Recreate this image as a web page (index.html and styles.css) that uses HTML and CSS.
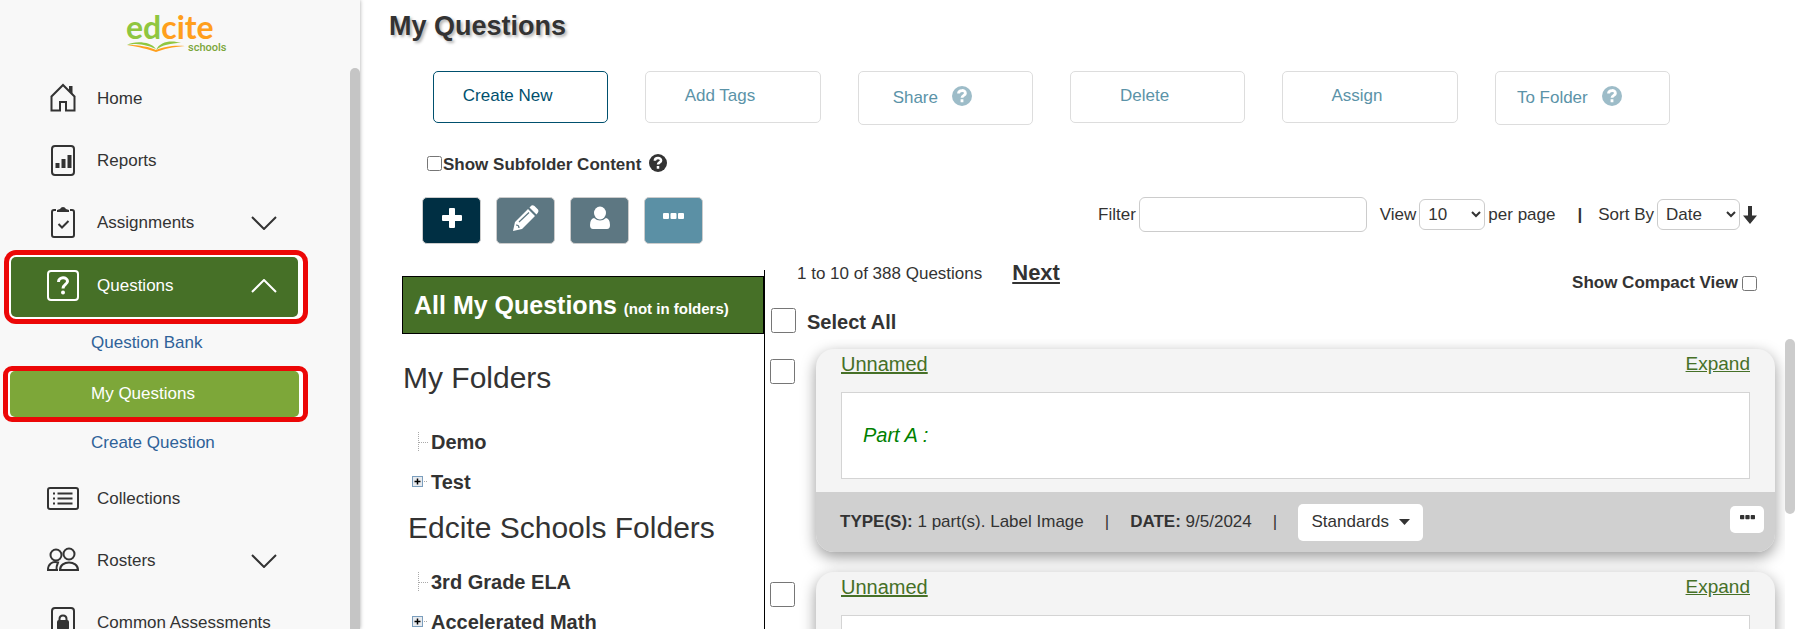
FILE: index.html
```html
<!DOCTYPE html>
<html lang="en">
<head>
  <meta charset="UTF-8" />
  <meta name="viewport" content="width=device-width, initial-scale=1.0"/>
  <title>My Questions</title>
  <link rel="stylesheet" href="styles.css">
</head>
<body>

  <svg class="sprite" aria-hidden="true">
    <symbol id="chevron" viewBox="0 0 26 14"><path d="M1 1l12 12L25 1" fill="none" stroke="currentColor" stroke-width="2"/></symbol>
    <symbol id="help" viewBox="0 0 20 20">
      <circle cx="10" cy="10" r="10" fill="currentColor"/>
      <path d="M6.500 7.600C6.500 3.500 13.600 3.600 13.400 7.300C13.300 9.400 10 9.300 10 11.800M10 13.300v3" fill="none" stroke="#fff" stroke-width="2.800"/>
    </symbol>
    <symbol id="dots" viewBox="0 0 21 7">
      <rect width="6" height="6" rx="1" fill="currentColor"/><rect x="7.500" width="6" height="6" rx="1" fill="currentColor"/><rect x="15" width="6" height="6" rx="1" fill="currentColor"/>
    </symbol>
    <symbol id="leaf" viewBox="0 0 16 20">
      <path d="M6.500 0v20M7 10.500h9" fill="none" stroke="#aaa" stroke-dasharray="1 1"/>
    </symbol>
    <symbol id="branch" viewBox="0 0 16 20">
      <path d="M12 9.500h4" fill="none" stroke="#aaa" stroke-dasharray="1 1"/>
      <rect x=".5" y="4.500" width="10" height="10" fill="#e8ebef" stroke="#7b9ebd"/>
      <path d="M2.500 9.500h6M5.500 6.500v6" stroke="#000" stroke-width="1.500"/>
    </symbol>
  </svg>

  <div class="layout">
    <aside class="sidebar">
      <a href="#" class="logo" aria-label="edcite schools">
        <svg width="110" height="56" viewBox="0 -9 110 56">
          <text x="0" y="30" class="logo-name"><tspan fill="#8fc640">ed</tspan><tspan fill="#ff9f1c">cite</tspan></text>
          <path d="M1 36C8 32 24 32 30 40C22 36 13 35 8 35z" fill="#8fc640"/>
          <path d="M30 41C34 32 46 31 55 34C45 34 36 36 30 41z" fill="#8fc640"/>
          <path d="M1 36C14 36 24 38 30 41C38 38 46 36 59 37C46 38 38 40 30 43C22 40 13 38 1 36z" fill="#ff9f1c"/>
          <text x="62" y="42" class="logo-sub" fill="#7ba63a">schools</text>
        </svg>
      </a>

      <nav class="nav">
        <ul>
          <li><a href="#" class="nav-link">
            <svg width="30" height="32" viewBox="0 0 30 32"><path d="M3 14L15 2l12 12M3.500 13.500V27.500H12V19h6v8.500h8.500V13.500" fill="none" stroke="currentColor" stroke-width="2"/><path d="M21 3h3.500v8L21 7.500z" fill="currentColor"/></svg>
            <span>Home</span></a></li>
          <li><a href="#" class="nav-link">
            <svg width="30" height="32" viewBox="0 0 30 32"><rect x="4" y="1" width="22" height="29" rx="3" fill="none" stroke="currentColor" stroke-width="2"/><path d="M7.500 18h4v5h-4zM13.500 14h4v9h-4zM19.500 10h4v13h-4z" fill="currentColor"/></svg>
            <span>Reports</span></a></li>
          <li><a href="#" class="nav-link">
            <svg width="30" height="32" viewBox="0 0 30 32"><path d="M8 3H6Q4 3 4 5V28Q4 30 6 30H24Q26 30 26 28V5Q26 3 24 3H22" fill="none" stroke="currentColor" stroke-width="2"/><path d="M9 5V3l3-1Q13 0 15 0T18 2l3 1V5z" fill="currentColor"/><path d="M10.500 17l3.500 3.500L20.500 14" fill="none" stroke="currentColor" stroke-width="2"/></svg>
            <span>Assignments</span>
            <svg class="chevron" width="26" height="14"><use href="#chevron"/></svg></a></li>
          <li class="framed framed-top"><a href="#" class="nav-link active">
            <svg width="32" height="32" viewBox="0 0 32 32"><rect x="1" y="1" width="30" height="29" rx="3" fill="none" stroke="currentColor" stroke-width="2"/><path d="M11.500 12C11.500 6.500 20.500 6.500 20.500 11.300C20.500 14.500 16 14.500 16 18.500" fill="none" stroke="currentColor" stroke-width="3"/><circle cx="16" cy="22.500" r="2" fill="currentColor"/></svg>
            <span>Questions</span>
            <svg class="chevron up" width="26" height="14"><use href="#chevron"/></svg></a></li>
          <li><a href="#" class="sub-link">Question Bank</a></li>
          <li class="framed framed-sub"><a href="#" class="sub-link current">My Questions</a></li>
          <li><a href="#" class="sub-link">Create Question</a></li>
          <li><a href="#" class="nav-link">
            <svg width="32" height="32" viewBox="0 0 32 32"><rect x="1" y="5" width="30" height="21" rx="2" fill="none" stroke="currentColor" stroke-width="2"/><path d="M6 10.500h2M6 15.500h2M6 20.500h2M10.500 10.500h15M10.500 15.500h15M10.500 20.500h15" stroke="currentColor" stroke-width="1.800"/></svg>
            <span>Collections</span></a></li>
          <li><a href="#" class="nav-link">
            <svg width="32" height="32" viewBox="0 0 32 32"><g fill="none" stroke="currentColor" stroke-width="2"><circle cx="9" cy="10" r="5.500"/><circle cx="22" cy="9" r="5.500"/><path d="M13 25C13 15 31 15 31 25zM11 25H1C1 19 5 16 11 17.500Q9 22 9.500 25"/></g></svg>
            <span>Rosters</span>
            <svg class="chevron" width="26" height="14"><use href="#chevron"/></svg></a></li>
          <li><a href="#" class="nav-link">
            <svg width="30" height="32" viewBox="0 0 30 32"><rect x="4" y="1" width="22" height="29" rx="3" fill="none" stroke="currentColor" stroke-width="2"/><path d="M11.500 14V12Q11.500 8.500 15 8.500T18.500 12V14" fill="none" stroke="currentColor" stroke-width="2"/><rect x="9" y="13" width="12" height="10" rx="2" fill="currentColor"/></svg>
            <span>Common Assessments</span></a></li>
        </ul>
        <div class="nav-thumb"></div>
      </nav>
    </aside>

    <main class="main">
      <h1>My Questions</h1>

      <div class="toolbar">
        <button type="button" class="tool primary">Create New</button>
        <button type="button" class="tool">Add Tags</button>
        <button type="button" class="tool tall">Share <svg width="20" height="20"><use href="#help"/></svg></button>
        <button type="button" class="tool">Delete</button>
        <button type="button" class="tool">Assign</button>
        <button type="button" class="tool tall">To Folder <svg width="20" height="20"><use href="#help"/></svg></button>
      </div>

      <div class="subfolder">
        <input type="checkbox" id="subfolder" class="check">
        <label for="subfolder">Show Subfolder Content</label>
        <svg width="18" height="18"><use href="#help"/></svg>
      </div>

      <div class="controls">
        <div class="actions">
          <button type="button" class="action add" aria-label="Add">
            <svg width="22" height="22" viewBox="0 0 22 22"><path d="M9 1h4q1 0 1 1v6h6q1 0 1 1v4q0 1-1 1h-6v6q0 1-1 1H9q-1 0-1-1v-6H2q-1 0-1-1V9q0-1 1-1h6V2q0-1 1-1z" fill="#fff"/></svg>
          </button>
          <button type="button" class="action" aria-label="Edit">
            <svg width="26" height="26" viewBox="0 0 26 26"><path d="M0 26l2-9L15 4l7 7L9 24zM16.500 2.500L18.500.5Q20 0 21.500 1L25 4.500Q26 6 25 7.500L23.500 9.500z" fill="#fff"/><path d="M6 17L16 7.500M3 20q3 0 3 3" fill="none" stroke="#5d7782" stroke-width="1.200"/></svg>
          </button>
          <button type="button" class="action" aria-label="User">
            <svg width="22" height="24" viewBox="0 0 22 24"><path d="M5 12Q8 14.500 11 14.500T17 12Q21 13 21 19Q21 23 18 23H4Q1 23 1 19Q1 13 5 12z" fill="#fff"/><ellipse cx="11" cy="7" rx="6" ry="6.500" fill="#fff"/></svg>
          </button>
          <button type="button" class="action more" aria-label="More">
            <svg width="21" height="7"><use href="#dots"/></svg>
          </button>
        </div>

        <div class="filters">
          <label for="filter">Filter</label>
          <input type="text" id="filter">
          <label for="perPage" class="view">View</label>
          <select id="perPage" class="per-page">
            <option>10</option>
            <option>25</option>
            <option>50</option>
          </select>
          <span>per page</span>
          <b class="divider">|</b>
          <label for="sortBy">Sort By</label>
          <select id="sortBy" class="sort-by">
            <option>Date</option>
            <option>Name</option>
          </select>
          <svg width="14" height="18" viewBox="0 0 14 18"><path d="M5 0h4v9.500h5L7 18 0 9.500h5z" fill="#333"/></svg>
        </div>
      </div>

      <div class="workspace">
        <section class="folders">
          <h2 class="all">All My Questions <small>(not in folders)</small></h2>
          <h3>My Folders</h3>
          <ul class="tree">
            <li><svg width="16" height="20"><use href="#leaf"/></svg>Demo</li>
            <li><svg width="16" height="20"><use href="#branch"/></svg>Test</li>
          </ul>
          <h3 class="schools">Edcite Schools Folders</h3>
          <ul class="tree">
            <li><svg width="16" height="20"><use href="#leaf"/></svg>3rd Grade ELA</li>
            <li><svg width="16" height="20"><use href="#branch"/></svg>Accelerated Math</li>
          </ul>
        </section>

        <section class="results">
          <div class="results-head">
            <span>1 to 10 of 388 Questions</span>
            <a href="#" class="next">Next</a>
            <div class="compact">
              <label for="compact">Show Compact View</label>
              <input type="checkbox" id="compact" class="check">
            </div>
          </div>
          <div class="select-all">
            <input type="checkbox" id="selectAll" class="check big">
            <label for="selectAll">Select All</label>
          </div>

          <div class="scroll-area">
            <div class="list">
              <div class="item">
                <input type="checkbox" class="check big" aria-label="Select question">
                <article class="card">
                  <div class="card-head">
                    <a href="#">Unnamed</a>
                    <a href="#" class="expand">Expand</a>
                  </div>
                  <div class="card-body">Part A :</div>
                  <div class="card-foot">
                    <span><b>TYPE(S):</b> 1 part(s). Label Image</span>
                    <span>|</span>
                    <span><b>DATE:</b> 9/5/2024</span>
                    <span>|</span>
                    <button type="button" class="standards">Standards <svg width="11" height="6" viewBox="0 0 11 6"><path d="M0 0h11L5.500 6z" fill="#333"/></svg></button>
                    <button type="button" class="card-more" aria-label="More"><svg width="15" height="5"><use href="#dots"/></svg></button>
                  </div>
                </article>
              </div>
              <div class="item">
                <input type="checkbox" class="check big" aria-label="Select question">
                <article class="card">
                  <div class="card-head">
                    <a href="#">Unnamed</a>
                    <a href="#" class="expand">Expand</a>
                  </div>
                  <div class="card-body"></div>
                </article>
              </div>
            </div>
            <div class="thumb"></div>
          </div>
        </section>
      </div>
    </main>
  </div>

</body>
</html>
```
FILE: styles.css
```css
* {
  box-sizing: border-box;
}
body {
  margin: 0;
  font-family: Arial, "Liberation Sans", sans-serif;
  font-size: 17px;
  color: #333;
  background: #fff;
}
ul {
  list-style: none;
  margin: 0;
  padding: 0;
}
button, input, select {
  font: inherit;
  color: inherit;
}
button {
  cursor: pointer;
}
.sprite {
  display: none;
}
.layout {
  display: flex;
  height: 100vh;
  overflow: hidden;
}

/* sidebar */
.sidebar {
  flex: 0 0 360px;
  background: #f8f8f8;
  box-shadow: 0 0 4px rgba(0, 0, 0, 0.35);
}
.logo {
  display: block;
  height: 68px;
  padding-left: 126px;
}
.logo svg {
  display: block;
}
.logo-name {
  font: bold 32px Lato, sans-serif;
}
.logo-sub {
  font: 500 11px Roboto, sans-serif;
}
.nav {
  display: flex;
}
.nav ul {
  flex: 1;
}
.nav-thumb {
  width: 10px;
  background: #c5c5c5;
  border-radius: 5px 5px 0 0;
}
.nav-link {
  display: flex;
  align-items: center;
  height: 62px;
  padding-left: 47px;
  color: #333;
  text-decoration: none;
}
.nav-link svg {
  flex: none;
}
.nav-link span {
  width: 154px;
  margin-left: 18px;
  white-space: nowrap;
}
.nav-link svg:first-child {
  width: 32px;
}
.nav-link .up {
  transform: rotate(180deg);
}
.nav-link.active {
  height: 60px;
  padding: 0 0 3px 36px;
  background: #467027;
  border-radius: 5px;
  color: #fff;
}
.sub-link {
  display: block;
  padding-left: 91px;
  line-height: 50px;
  color: #2f6299;
  text-decoration: none;
}
.sub-link.current {
  padding-left: 81px;
  line-height: 46px;
  background: #7da739;
  border-radius: 5px;
  color: #fff;
}
.framed {
  border: 5px solid #ec0707;
  background: #fff;
}
.framed-top {
  margin: -4px 42px -6px 4px;
  padding: 2px 5px 2px 2px;
  border-radius: 12px;
}
.framed-sub {
  margin: -2px 42px -4px 3px;
  padding: 0 4px 0 2px;
  border-radius: 9px;
}

/* main */
.main {
  flex: 1;
  min-width: 0;
  display: flex;
  flex-direction: column;
}
h1 {
  margin: 0 0 0 29px;
  font-size: 27px;
  line-height: 52px;
  text-shadow: 2px 2px 3px rgba(0, 0, 0, 0.3);
}
.toolbar {
  display: grid;
  grid-template-columns: repeat(6, 1fr);
  gap: 37px;
  align-items: start;
  margin: 19px 140px 0 73px;
}
.tool {
  display: flex;
  align-items: center;
  justify-content: center;
  gap: 14px;
  height: 52px;
  padding: 0 26px 2px 0;
  background: #fff;
  border: 1px solid #ddd;
  border-radius: 5px;
  color: #5b93a8;
}
.tool.tall {
  height: 54px;
  padding-bottom: 0;
}
.tool.primary {
  border-color: #00506e;
  color: #00506e;
}
.tool svg {
  margin-bottom: 4px;
  color: #9dbcc8;
}
.check {
  width: 15px;
  height: 15px;
  margin: 0;
}
.check.big {
  flex: none;
  width: 25px;
  height: 25px;
}
.subfolder {
  display: flex;
  align-items: center;
  height: 24px;
  margin: 26px 0 0 67px;
  font-weight: bold;
}
.subfolder label {
  margin: 4px 8px 0 1px;
}
.controls {
  display: flex;
  justify-content: space-between;
  margin: 22px 53px 0 62px;
}
.actions {
  display: flex;
  gap: 15px;
}
.action {
  display: flex;
  justify-content: center;
  align-items: center;
  width: 59px;
  height: 47px;
  padding: 0 0 6px;
  background: #5d7782;
  border: 1px solid #ccc;
  border-radius: 5px;
}
.action.add {
  background: #002f43;
}
.action.more {
  padding-bottom: 8px;
  background: #5b90a5;
  color: #fff;
}
.filters {
  display: flex;
  align-items: center;
  align-self: flex-start;
  gap: 3px;
}
.filters input {
  width: 228px;
  height: 35px;
  border: 1px solid #ccc;
  border-radius: 6px;
}
.filters select {
  height: 31px;
  padding-left: 4px;
  background: #fff;
  border: 1px solid #ccc;
  border-radius: 6px;
}
.view {
  margin-left: 10px;
}
.per-page {
  width: 66px;
}
.sort-by {
  width: 83px;
}
.divider {
  margin: 0 13px 0 19px;
}

.workspace {
  flex: 1;
  display: flex;
  min-height: 0;
  margin: 11px 15px 0 42px;
}
.folders {
  flex: 0 0 363px;
  margin-top: 15px;
  border-right: 1px solid #000;
  overflow: hidden;
}
.all {
  margin: 6px 0 0;
  padding-left: 11px;
  background: #467027;
  border: 1px solid #000;
  color: #fff;
  font-size: 25px;
  line-height: 56px;
}
.all small {
  font-size: 15px;
  line-height: 1;
}
h3 {
  margin: 24px 0 24px 1px;
  font-size: 30px;
  font-weight: normal;
  line-height: 40px;
}
h3.schools {
  margin: 6px 0 14px 6px;
}
.tree li {
  display: flex;
  align-items: center;
  gap: 3px;
  height: 40px;
  padding-left: 10px;
  font-size: 20px;
  font-weight: bold;
}

.results {
  flex: 1;
  min-width: 0;
  display: flex;
  flex-direction: column;
}
.results-head {
  display: flex;
  height: 47px;
  padding: 0 38px 0 32px;
  line-height: 38px;
}
.next {
  margin-left: 30px;
  color: #333;
  font-size: 22px;
  font-weight: bold;
  line-height: 36px;
}
.compact {
  display: flex;
  align-items: center;
  align-self: flex-end;
  gap: 4px;
  margin-left: auto;
  font-weight: bold;
}
.select-all {
  display: flex;
  align-items: center;
  gap: 11px;
  height: 37px;
  padding-left: 6px;
  font-size: 20px;
  font-weight: bold;
}
.select-all label {
  padding-top: 4px;
}
.scroll-area {
  flex: 1;
  display: flex;
  min-height: 0;
}
.list {
  flex: 1;
  padding: 10px 10px 0 5px;
  overflow: hidden;
}
.thumb {
  width: 10px;
  height: 175px;
  background: #ccc;
  border-radius: 5px;
}
.item {
  display: flex;
  gap: 21px;
  margin-bottom: 20px;
}
.item .check {
  margin-top: 10px;
}
.card {
  flex: 1;
  background: #f4f4f4;
  border-radius: 18px;
  box-shadow: 0 5px 15px rgba(0, 0, 0, 0.4);
  overflow: hidden;
}
.card-head {
  display: flex;
  justify-content: space-between;
  padding: 0 25px;
  font-size: 20px;
  line-height: 30px;
}
.card-head a {
  color: #467027;
}
.card-head .expand {
  font-size: 19px;
}
.card-body {
  height: 87px;
  margin: 13px 25px;
  padding-left: 21px;
  background: #fff;
  border: 1px solid #d4d4d4;
  color: #008000;
  font-size: 20px;
  font-style: italic;
  line-height: 85px;
}
.card-foot {
  display: flex;
  align-items: center;
  gap: 21px;
  height: 60px;
  padding: 0 11px 0 24px;
  background: #d0d0d0;
}
.standards, .card-more {
  background: #fff;
  border: 0;
  border-radius: 5px;
}
.standards {
  display: flex;
  align-items: center;
  justify-content: center;
  gap: 10px;
  width: 125px;
  height: 37px;
  padding: 0;
}
.card-more {
  width: 34px;
  height: 27px;
  margin: 0 0 6px auto;
  padding: 0;
}
.card-more svg {
  display: block;
  margin: 0 auto 3px;
}
```
